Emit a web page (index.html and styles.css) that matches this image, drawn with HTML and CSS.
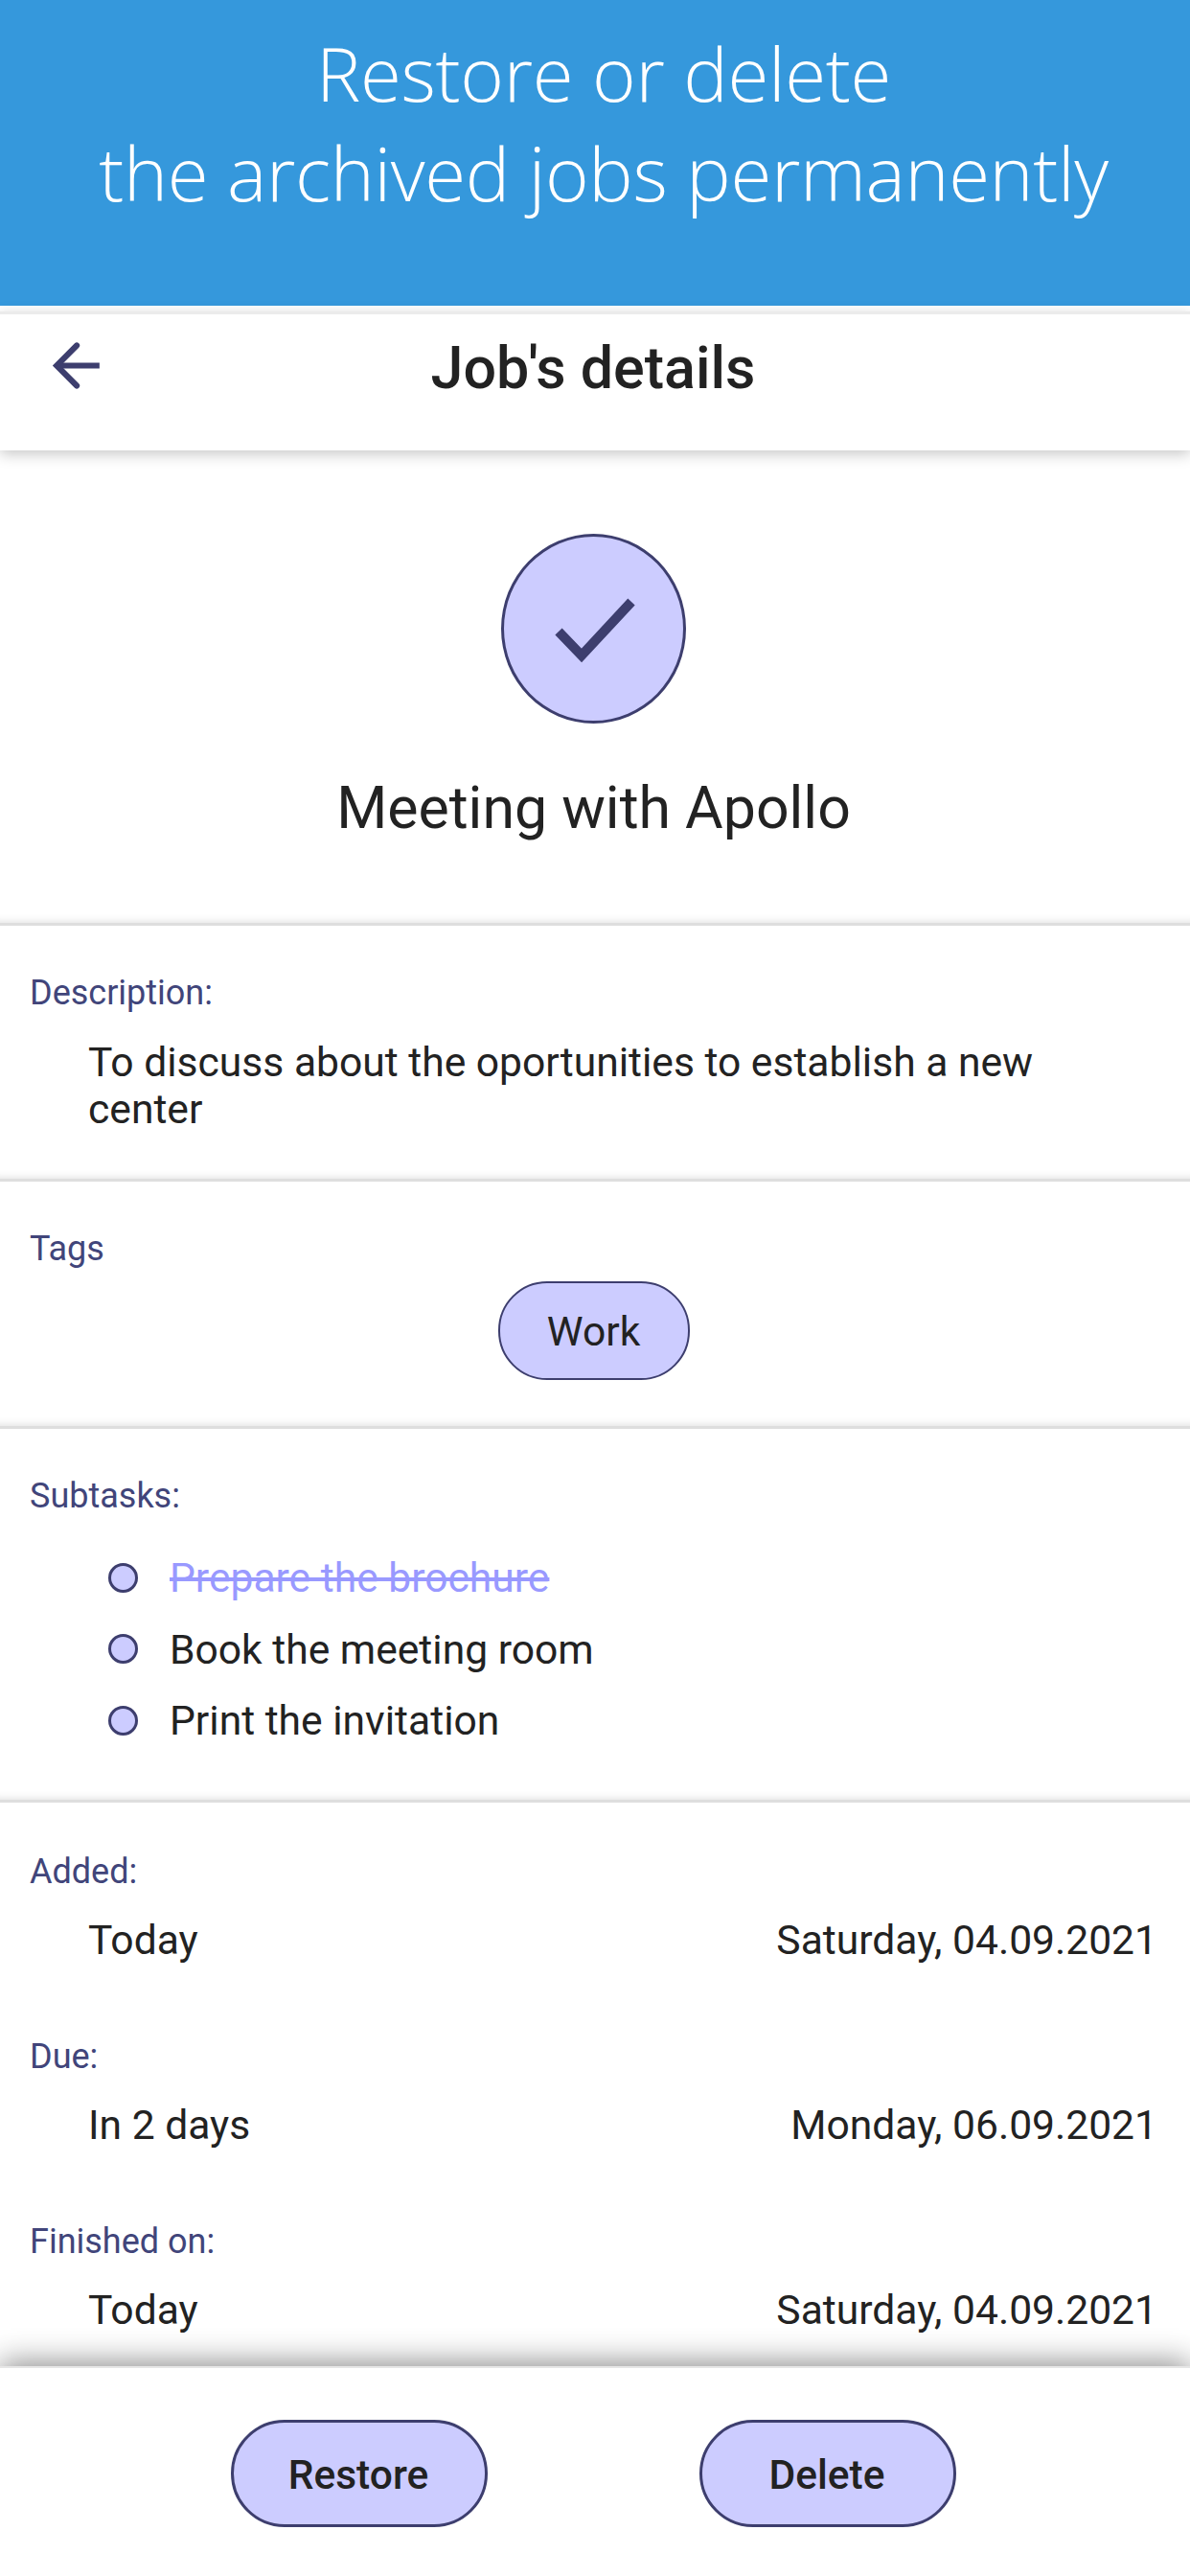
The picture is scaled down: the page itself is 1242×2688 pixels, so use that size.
FILE: index.html
```html
<!DOCTYPE html>
<html lang="en">
<head>
<meta charset="utf-8">
<title>Job's details</title>
<link rel="stylesheet" href="styles.css">
</head>
<body>
<div class="screen">
  <header class="banner"><p>Restore or delete<br>the archived jobs permanently</p></header>
  <div class="app">
    <div class="appbar">
      <svg class="back" viewBox="0 0 24 24"><path class="shaft" d="M6 12H20"/><path class="head" d="M12.2 5.1 5.3 12l6.9 6.9"/></svg>
      <h1>Job's details</h1>
    </div>
    <main class="content">
      <section class="hero">
        <div class="status">
          <svg viewBox="0 0 100 100"><path d="M13 53 37 78 89 22"/></svg>
        </div>
        <h2>Meeting with Apollo</h2>
      </section>
      <section class="block desc">
        <div class="label">Description:</div>
        <p class="value">To discuss about the oportunities to establish a new center</p>
      </section>
      <section class="block tags">
        <div class="label">Tags</div>
        <div class="chip-row"><span class="chip">Work</span></div>
      </section>
      <section class="block subtasks">
        <div class="label">Subtasks:</div>
        <ul>
          <li class="done"><span>Prepare the brochure</span></li>
          <li><span>Book the meeting room</span></li>
          <li><span>Print the invitation</span></li>
        </ul>
      </section>
      <section class="dates">
        <div class="date-item">
          <div class="label">Added:</div>
          <div class="date-row"><span>Today</span><span>Saturday, 04.09.2021</span></div>
        </div>
        <div class="date-item">
          <div class="label">Due:</div>
          <div class="date-row"><span>In 2 days</span><span>Monday, 06.09.2021</span></div>
        </div>
        <div class="date-item">
          <div class="label">Finished on:</div>
          <div class="date-row"><span>Today</span><span>Saturday, 04.09.2021</span></div>
        </div>
      </section>
    </main>
    <footer class="actions">
      <button class="btn">Restore</button>
      <button class="btn">Delete</button>
    </footer>
  </div>
</div>
</body>
</html>
```
FILE: styles.css
```css
* { box-sizing: border-box; }
html, body { margin: 0; padding: 0; background: #fff; }
body { font-family: Roboto, sans-serif; color: #222; }
.screen { width: 1242px; height: 2688px; display: flex; flex-direction: column; overflow: hidden; }
.banner {
  height: 319px; flex: none; background: #3598dc; color: #fff;
  font-family: "Open Sans", sans-serif; font-weight: 300; font-size: 78px; letter-spacing: -0.35px; line-height: 104px;
  text-align: center; padding: 24px 0 0 18px;
}
.banner p { margin: 0; }
.app { flex: 1; display: flex; flex-direction: column; min-height: 0; padding-top: 6px; }
.appbar {
  flex: none; height: 145px; display: flex; align-items: flex-start; justify-content: center;
  position: relative; z-index: 2; background: #fff;
  border-top: 3px solid #ebebeb;
  box-shadow: 0 4px 14px rgba(0,0,0,.22);
  padding-top: 20px;
}
.back { position: absolute; left: 43px; top: 17px; width: 73px; height: 73px; fill: none; stroke: #3d3e6e; stroke-width: 2; }
.back .head { stroke-linecap: round; }
.appbar h1 { margin: 0 4px 0 0; font-size: 61px; line-height: 72px; font-weight: 500; }
.content { flex: 1; min-height: 0; overflow: hidden; }
.hero, .block { box-shadow: inset 0 -10px 10px -10px rgba(0,0,0,.16); border-bottom: 3px solid #dedede; }
.hero { height: 496px; display: flex; flex-direction: column; align-items: center; padding-top: 87px; padding-right: 3px; }
.status { width: 193px; height: 198px; border-radius: 50%; background: #ccf; border: 3px solid #3d3e6e; display: flex; align-items: center; justify-content: center; }
.status svg { width: 100px; height: 100px; fill: none; stroke: #3d3e6e; stroke-width: 10; }
.hero h2 { margin: 53px 0 0; font-size: 60.8px; line-height: 72px; font-weight: 400; }
.block { padding: 48px 20px 0 31px; }
.label { font-size: 36px; line-height: 44px; color: #41457a; }
.desc { height: 267px; }
.value { margin: 26px 100px 0 61px; font-size: 42.6px; line-height: 49px; }
.tags { height: 258px; }
.chip-row { display: flex; justify-content: center; margin: 12px 0 0; padding-right: 14px; }
.chip { width: 200px; height: 103px; border-radius: 51px; background: #ccf; border: 2px solid #3d3e6e; display: flex; align-items: center; justify-content: center; font-size: 42.6px; }
.subtasks { height: 390px; }
.subtasks ul { list-style: none; margin: 26px 0 0 0; padding: 0 0 0 82px; }
.subtasks li { display: flex; align-items: center; height: 74.5px; font-size: 42.6px; gap: 33px; }
.subtasks li::before { content: ""; width: 25px; height: 25px; flex: none; border-radius: 50%; background: #ccf; border: 3.5px solid #3d3e6e; }
.subtasks .done span { color: #9999ff; text-decoration: line-through; }
.dates { padding: 50px 34px 0 31px; }
.date-item { height: 193px; }
.date-row { display: flex; justify-content: space-between; margin: 24px 0 0 61px; font-size: 42.6px; line-height: 50px; }
.actions {
  flex: none; height: 219px; background: #fff; position: relative; z-index: 2;
  border-top: 2px solid #e6e6e6;
  box-shadow: 0 -4px 30px rgba(0,0,0,.45);
  display: flex; justify-content: center; gap: 221px; padding-top: 54px; padding-right: 3px;
}
.btn { width: 268px; height: 112px; border-radius: 56px; background: #ccf; border: 3px solid #3d3e6e; font-family: Roboto, sans-serif; font-size: 42.5px; font-weight: 500; color: #222; padding: 3px 2px 0 0; }
```
